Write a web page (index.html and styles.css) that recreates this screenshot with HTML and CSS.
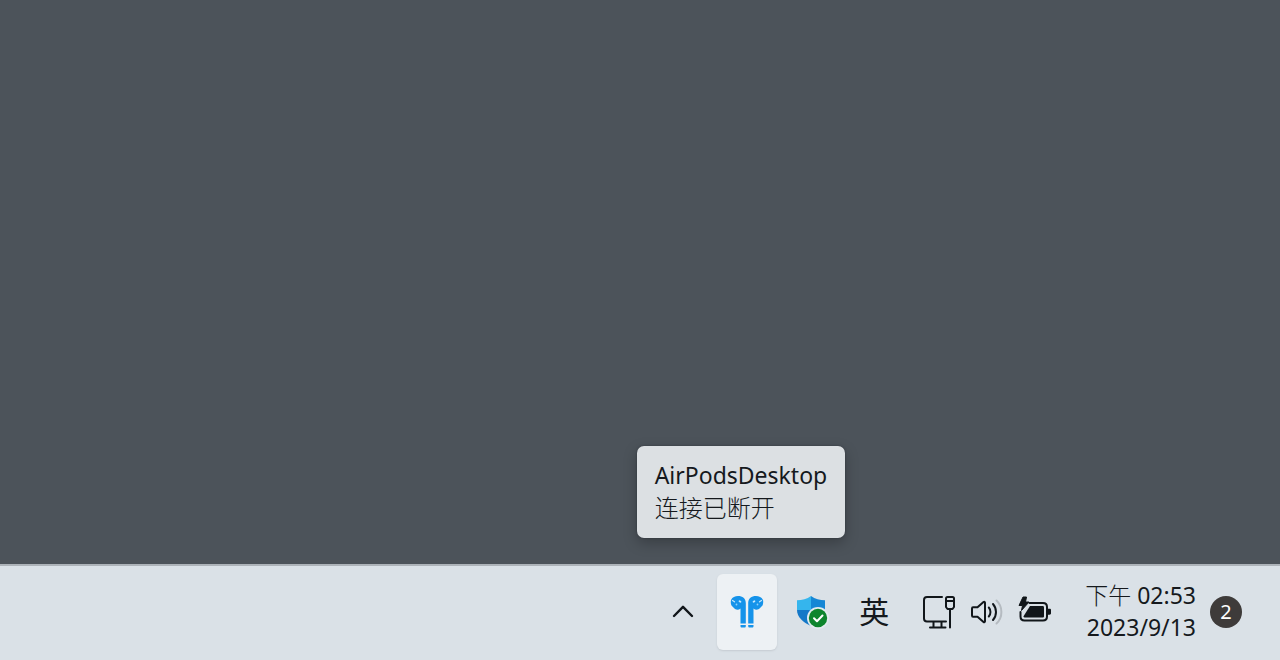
FILE: index.html
```html
<!DOCTYPE html>
<html lang="zh-CN">
<head>
<meta charset="utf-8">
<meta name="viewport" content="width=device-width, initial-scale=1">
<title>AirPodsDesktop</title>
<link rel="stylesheet" href="styles.css">
</head>
<body>
<div class="desktop">
  <main class="wallpaper"></main>
  <footer class="taskbar">
    <button class="tray-button chevron" aria-label="显示隐藏的图标">
      <svg width="24" height="24" viewBox="0 0 24 24"><path d="M3 16 12 6.800l9 9.200" fill="none" stroke="#11161a" stroke-width="2.400" stroke-linecap="round" stroke-linejoin="round"/></svg>
    </button>
    <div class="tray-slot">
      <button class="tray-button airpods" aria-describedby="tip" aria-label="AirPodsDesktop">
        <svg width="36" height="36" viewBox="0 0 36 36">
          <g id="bud">
            <path d="M2 6C3.500 3 6 2 9 2C13.500 2 16.800 4.500 16.800 9V29.500H11.500V14.500C9.500 16.300 6.500 16 5 14L2.500 11.500C1.800 10 1.600 8 2 6Z" fill="#1593ea"/>
            <path d="M11.500 31H16.800V32C16.800 33 16.300 33.500 15.500 33.500H12.800C12 33.500 11.500 33 11.500 32Z" fill="#1593ea"/>
            <path d="M3.500 6.500 5.500 7.800" stroke="#bfe5fc" stroke-width="1.300" stroke-linecap="round"/>
            <ellipse cx="11" cy="7.500" rx="1.500" ry="1" fill="#c9eaff" transform="rotate(35 11 7.500)"/>
            <circle cx="7.500" cy="10.500" r=".9" fill="#8ed0fa"/>
          </g>
          <use href="#bud" transform="translate(36 0) scale(-1 1)"/>
        </svg>
      </button>
      <div class="tooltip" id="tip" role="tooltip">
        <div>AirPodsDesktop</div>
        <div class="status">连接已断开</div>
      </div>
    </div>
    <button class="tray-button shield" aria-label="Windows 安全中心">
      <svg width="34" height="34" viewBox="0 0 34 34">
        <path d="M16 1C12 4 7 5.300 2 5.300V15H16Z" fill="#35b5ed"/>
        <path d="M16 1C20 4 25 5.300 30 5.300V15H16Z" fill="#1687d5"/>
        <path d="M2 15H16V31C8 27.500 2 22 2 15Z" fill="#1478c8"/>
        <path d="M16 15H30C30 22 24 27.500 16 31Z" fill="#1757a5"/>
        <circle cx="23" cy="23" r="11" fill="#e3ebef"/>
        <circle cx="23" cy="23" r="9.200" fill="#0d852d"/>
        <path d="m19 23.200 3 3 5.500-5.700" fill="none" stroke="#fff" stroke-width="2" stroke-linecap="round" stroke-linejoin="round"/>
      </svg>
    </button>
    <button class="tray-button language">英</button>
    <button class="tray-button system" aria-label="网络、音量、电池">
      <svg width="34" height="36" viewBox="0 0 34 36" fill="none" stroke="#11161a" stroke-width="2" stroke-linecap="round" stroke-linejoin="round">
        <path d="M20 3H5C3 3 2 4 2 6V24.500C2 26.500 3 27.500 5 27.500H24M11.500 28V33M19.500 28V33M8 33.500H23.500"/>
        <path d="M25.500 3H30.500C31.500 3 32 3.500 32 4.500V13L30.500 15H25.500L24 13V4.500C24 3.500 24.500 3 25.500 3ZM24 7H32M28 15V33.500"/>
      </svg>
      <svg width="34" height="36" viewBox="0 0 34 36" fill="none" stroke="#11161a" stroke-width="2" stroke-linecap="round" stroke-linejoin="round">
        <path d="M2 14.500C2 13.800 2.400 13.300 3 13.300H7.500L13.500 8C14.200 7.400 15 7.800 15 8.700V27.300C15 28.200 14.200 28.600 13.500 28L7.500 22.700H3C2.400 22.700 2 22.200 2 21.500ZM18.800 13.500C21 16 21 20 18.800 22.500M23 10C27 14.500 27 21.500 23 26"/>
        <path d="M26.500 6.500C33 12.500 33 23.500 26.500 29.500" stroke="#b5bbc1"/>
      </svg>
      <svg width="34" height="36" viewBox="0 0 34 36">
        <path d="M11.500 9H25C27.500 9 29 10.500 29 13V22.500C29 25 27.500 26.500 25 26.500H6.500C4 26.500 2.500 25 2.500 22.500V18" fill="none" stroke="#11161a" stroke-width="2" stroke-linecap="round"/>
        <path d="M12 12H24.500C25.500 12 26 12.500 26 13.500V22C26 23 25.500 23.500 24.500 23.500H6.500C5.800 23.500 5.300 23 5.500 22.300Z" fill="#11161a"/>
        <path d="M29 14.800H31.500C32.500 14.800 33 15.300 33 16.200V19.300C33 20.200 32.500 20.700 31.500 20.700H29Z" fill="#11161a"/>
        <path d="M5 3H8.500L7.500 8H11L3.500 16.500L4.500 11.500H1Z" fill="#11161a" stroke="#11161a" stroke-linejoin="round"/>
      </svg>
    </button>
    <button class="tray-button clock">
      <time datetime="2023-09-13T14:53"><span class="meridiem">下午</span> 02:53<br>2023/9/13</time>
      <span class="badge">2</span>
    </button>
  </footer>
</div>
</body>
</html>
```
FILE: styles.css
```css
* {
  box-sizing: border-box;
}

body {
  margin: 0;
  color: #15191d;
  font-family: "Noto Sans", "Noto Sans CJK SC", sans-serif;
}

.desktop {
  display: flex;
  flex-direction: column;
  min-height: 100vh;
}

.wallpaper {
  flex: 1;
  background: #4c535a;
}

.taskbar {
  display: flex;
  justify-content: flex-end;
  align-items: stretch;
  padding: 8px 38px 10px 0;
  border-top: 2px solid #adb3b9;
  background: #dae1e7;
}

.tray-button {
  display: flex;
  align-items: center;
  justify-content: center;
  height: 76px;
  padding: 0;
  border: 0;
  border-radius: 6px;
  background: transparent;
  color: inherit;
  font: inherit;
}

.chevron {
  width: 68px;
}

.tray-slot {
  position: relative;
}

.airpods {
  width: 60px;
  background: #edf1f4;
  box-shadow: 0 1px 2px #c5cbd1;
}

.shield {
  width: 70px;
}

.language {
  width: 54px;
  padding-bottom: 4px;
  font-family: "Noto Sans CJK SC", sans-serif;
  font-size: 30px;
}

.system {
  gap: 14px;
  padding: 0 19px 0 21px;
}

.clock {
  gap: 14px;
  padding-left: 14px;
  font-size: 23px;
  line-height: 32px;
  text-align: right;
}

.clock time {
  padding-bottom: 4px;
}

.meridiem,
.status {
  font-family: "Noto Sans CJK SC", sans-serif;
  font-weight: 300;
}

.status {
  font-size: 24px;
}

.badge {
  width: 32px;
  height: 32px;
  border-radius: 50%;
  background: #3e3b3a;
  color: #fff;
  font-size: 20px;
  text-align: center;
}

.tooltip {
  position: absolute;
  right: -68px;
  bottom: 112px;
  padding: 14px 18px 16px;
  border-radius: 7px;
  background: #dce0e3;
  box-shadow: 0 5px 14px rgb(0 0 0 / 25%), 0 0 2px #343a40;
  font-size: 23px;
  line-height: 31px;
  white-space: nowrap;
}
```
